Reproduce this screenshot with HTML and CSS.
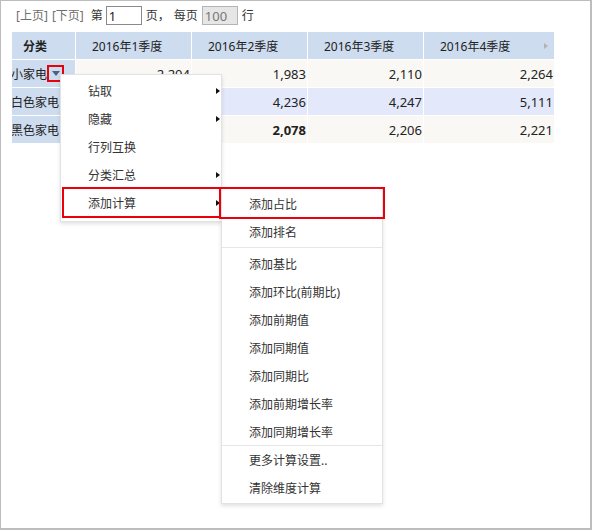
FILE: index.html
```html
<!DOCTYPE html>
<html lang="zh-CN">
<head>
<meta charset="utf-8">
<title>分类 报表</title>
<link rel="stylesheet" href="styles.css">
</head>
<body>
<div class="frame">
  <div class="pager">
    <span class="plink">[上页]</span>
    <span class="plink gap-s">[下页]</span>
    <span class="plabel gap-l">第</span>
    <input class="pinput" type="text" value="1">
    <span class="plabel gap-m">页，</span>
    <span class="plabel gap-s">每页</span>
    <input class="pinput disabled" type="text" value="100" disabled>
    <span class="plabel gap-m">行</span>
  </div>

  <table class="grid">
    <colgroup>
      <col class="c-cat"><col class="c-q"><col class="c-q"><col class="c-q"><col class="c-last">
    </colgroup>
    <thead>
      <tr>
        <th class="h-cat">分类</th>
        <th class="h-q">2016年1季度</th>
        <th class="h-q">2016年2季度</th>
        <th class="h-q">2016年3季度</th>
        <th class="h-q"><div class="h-last">2016年4季度<span class="h-tri"></span></div></th>
      </tr>
    </thead>
    <tbody>
      <tr class="r-odd">
        <td class="lbl"><span class="lbl-txt">小家电</span><span class="dd"><span class="dd-tri"></span></span></td>
        <td class="num">2,204</td>
        <td class="num">1,983</td>
        <td class="num">2,110</td>
        <td class="num">2,264</td>
      </tr>
      <tr class="r-even">
        <td class="lbl"><span class="lbl-txt">白色家电</span></td>
        <td class="num">4,102</td>
        <td class="num">4,236</td>
        <td class="num">4,247</td>
        <td class="num">5,111</td>
      </tr>
      <tr class="r-odd">
        <td class="lbl"><span class="lbl-txt">黑色家电</span></td>
        <td class="num">2,135</td>
        <td class="num bold">2,078</td>
        <td class="num">2,206</td>
        <td class="num">2,221</td>
      </tr>
    </tbody>
  </table>

  <div class="menu menu-main">
    <div class="mi"><span>钻取</span><span class="arr"></span></div>
    <div class="mi"><span>隐藏</span><span class="arr"></span></div>
    <div class="mi"><span>行列互换</span></div>
    <div class="mi"><span>分类汇总</span><span class="arr"></span></div>
    <div class="mi"><span>添加计算</span><span class="arr"></span></div>
  </div>

  <div class="menu menu-sub">
    <div class="mi"><span>添加占比</span></div>
    <div class="mi"><span>添加排名</span></div>
    <div class="sep"></div>
    <div class="mi"><span>添加基比</span></div>
    <div class="mi"><span>添加环比(前期比)</span></div>
    <div class="mi"><span>添加前期值</span></div>
    <div class="mi"><span>添加同期值</span></div>
    <div class="mi"><span>添加同期比</span></div>
    <div class="mi"><span>添加前期增长率</span></div>
    <div class="mi"><span>添加同期增长率</span></div>
    <div class="sep sep-tight"></div>
    <div class="mi"><span>更多计算设置..</span></div>
    <div class="mi"><span>清除维度计算</span></div>
  </div>

  <div class="mark mark-calc"></div>
  <div class="mark mark-ratio"></div>
</div>
</body>
</html>
```

FILE: styles.css
```css
* { box-sizing: border-box; }

html, body {
  margin: 0;
  padding: 0;
  background: #ffffff;
}

body {
  font-family: "Noto Sans", "Noto Sans CJK SC", sans-serif;
  font-size: 12px;
  color: #333333;
}

.frame {
  position: relative;
  width: 592px;
  height: 530px;
  border: 1px solid #bdbdbd;
  border-right-width: 2px;
  border-bottom-width: 2px;
  background: #ffffff;
  overflow: hidden;
}

/* ---------- pager ---------- */
.pager {
  display: flex;
  align-items: center;
  height: 19px;
  margin-top: 5px;
  padding-left: 15px;
  line-height: 19px;
}

.plink { color: #6e6e6e; }
.plabel { color: #333333; }
.gap-s { margin-left: 4px; }
.gap-m { margin-left: 4px; }
.gap-l { margin-left: 7px; }

.pinput {
  width: 36px;
  height: 19px;
  margin: 0 0 0 3px;
  padding: 0 2px;
  border: 1px solid #8a8a8a;
  font-family: "Noto Sans", "Noto Sans CJK SC", sans-serif;
  font-size: 13px;
  line-height: 17px;
  color: #222222;
  background: #ffffff;
  outline: none;
}

.pinput.disabled {
  margin-left: 4px;
  border-color: #b4b4b4;
  background: #e6e6e6;
  color: #777777;
}

/* ---------- grid ---------- */
.grid {
  margin: 6px 0 0 10px;
  border-collapse: separate;
  border-spacing: 1px;
  table-layout: fixed;
  width: 544px;
  background: #ffffff;
}

.c-cat { width: 63px; }
.c-q { width: 115px; }
.c-last { width: 130px; }

.grid th,
.grid td {
  height: 27px;
  padding: 0;
  white-space: nowrap;
  overflow: hidden;
  vertical-align: middle;
}

.grid th {
  background: #cedcef;
  font-weight: normal;
  text-align: left;
  color: #222222;
}

.h-cat {
  padding-left: 11px !important;
  font-weight: bold !important;
}

.h-q { padding-left: 16px !important; }

.h-last {
  display: flex;
  align-items: center;
  justify-content: space-between;
  padding-right: 6px;
}

.h-tri {
  width: 0;
  height: 0;
  border-top: 3px solid transparent;
  border-bottom: 3px solid transparent;
  border-left: 4px solid #b3b3b3;
}

.r-odd td { background: #faf8f4; }
.r-even td { background: #e3e9fb; }

.grid td.lbl {
  background: #cedcef;
  color: #222222;
  padding-left: 0;
}

.lbl-txt {
  display: inline-block;
  margin-left: -1px;
  vertical-align: middle;
}

.dd {
  display: inline-flex;
  align-items: center;
  justify-content: center;
  width: 17px;
  height: 17px;
  margin-left: 0;
  border: 2px solid #e8000b;
  vertical-align: middle;
}

.dd-tri {
  width: 0;
  height: 0;
  border-left: 4px solid transparent;
  border-right: 4px solid transparent;
  border-top: 5px solid #47637f;
}

.num {
  text-align: right;
  padding-right: 1px !important;
  font-size: 13px;
  color: #222222;
}

.num.bold { font-weight: bold; }

/* ---------- context menus ---------- */
.menu {
  position: absolute;
  width: 162px;
  background: #ffffff;
  border: 1px solid #e2e2e2;
  box-shadow: 0 2px 4px rgba(0, 0, 0, 0.12);
  color: #333333;
  font-size: 12px;
}

.menu-main {
  left: 59px;
  top: 73px;
  padding: 3px 0;
}

.menu-sub {
  left: 220px;
  top: 186px;
  padding: 3px 0 0;
}

.mi {
  display: flex;
  align-items: center;
  justify-content: space-between;
  height: 28px;
  padding: 0 1px 0 27px;
  line-height: 28px;
}

.arr {
  width: 0;
  height: 0;
  margin-top: -3px;
  border-top: 3px solid transparent;
  border-bottom: 3px solid transparent;
  border-left: 4px solid #111111;
}

.sep {
  height: 1px;
  margin: 0 0 3px;
  background: #e6e6e6;
}

.sep-tight {
  margin: -2px 0 1px;
}

/* ---------- annotation boxes ---------- */
.mark {
  position: absolute;
  border: 2px solid #e8000b;
}

.mark-calc {
  left: 61px;
  top: 186px;
  width: 159px;
  height: 31px;
}

.mark-ratio {
  left: 218px;
  top: 186px;
  width: 166px;
  height: 32px;
}
```
